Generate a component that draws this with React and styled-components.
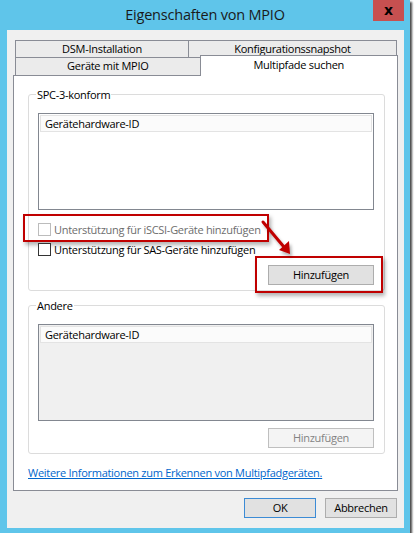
import React from "react";
import styled, {createGlobalStyle} from "styled-components";

const GlobalStyle = createGlobalStyle`
  html, body {
    margin: 0;
    padding: 0;
    background: #ffffff;
  }
  body {
    font-family: "Open Sans", "Noto Sans", sans-serif;
    font-size: 11px;
    letter-spacing: -0.28px;
    color: #000;
  }
`;

const Window = styled.div`
  width: 410px;
  height: 533px;
  background: #5fc5ea;
  box-shadow: 2px 2px 2px rgba(40, 40, 40, 0.85);
  display: flex;
  flex-direction: column;
`;

const TitleBar = styled.div`
  height: 30px;
  display: grid;
  grid-template-columns: 1fr auto 1fr;
  align-items: start;
  flex-shrink: 0;
`;

const Title = styled.div`
  grid-column: 2;
  font-size: 14.5px;
  line-height: 30px;
  color: #1a1a1a;
  letter-spacing: -0.2px;
`;

const CloseButton = styled.div`
  grid-column: 3;
  justify-self: end;
  width: 31px;
  height: 21px;
  margin-right: 6px;
  background: #c75050;
  display: flex;
  align-items: center;
  justify-content: center;
  font-family: "DejaVu Sans", sans-serif;
  font-weight: bold;
  font-size: 14px;
  line-height: 1;
  color: #000;
  padding-bottom: 2px;
  box-sizing: border-box;
`;

const Client = styled.div`
  flex: 1;
  margin: 0 6px 5px 7px;
  background: #f0f0f0;
  padding: 10px 6px 0 6px;
  display: flex;
  flex-direction: column;
`;

const TabRow = styled.div`
  display: flex;
  padding-left: 2px;
  height: ${p => p.$height}px;
  align-items: flex-start;
`;

const Tab = styled.div`
  width: ${p => p.$width}px;
  height: ${p => p.$selected ? 21 : p.$height}px;
  margin-top: ${p => p.$selected ? -2 : 0}px;
  margin-left: ${p => p.$shared ? -1 : 0}px;
  box-sizing: border-box;
  border: 1px solid #898c95;
  border-bottom: none;
  background: ${p => p.$selected ? "#ffffff" : "#ebebeb"};
  position: relative;
  z-index: ${p => p.$selected ? 2 : 0};
  text-align: center;
  line-height: ${p => p.$selected ? 18 : 16}px;
  color: #000;
`;

const Panel = styled.div`
  width: 385px;
  height: 416px;
  box-sizing: border-box;
  border: 1px solid #898c95;
  background: #ffffff;
  padding: 11px 12px 0 14px;
  position: relative;
  display: flex;
  flex-direction: column;
`;

const Group = styled.fieldset`
  margin: 0;
  margin-bottom: ${p => p.$gap || 0}px;
  padding: 0 10px 5px 9px;
  border: 1px solid #dcdcdc;
  border-radius: 3px;
  min-width: 0;
  display: flex;
  flex-direction: column;
`;

const Legend = styled.legend`
  margin-left: -2px;
  padding: 0 1px;
  line-height: 15px;
  color: #000;
`;

const ListBox = styled.div`
  height: 97px;
  margin-top: ${p => p.$top}px;
  box-sizing: border-box;
  border: 1px solid #828790;
  background: ${p => p.$disabled ? "#f0f0f0" : "#ffffff"};
  padding: 1px;
`;

const ListHeader = styled.div`
  height: 17px;
  box-sizing: border-box;
  border: 1px solid #e3e3e3;
  background: #fbfbfb;
  padding-left: 4px;
  line-height: 15px;
  color: #000;
`;

const CheckRow = styled.div`
  display: flex;
  align-items: center;
  gap: 3px;
  height: 20px;
  margin-top: ${p => p.$top || 0}px;
  position: relative;
  color: ${p => p.$disabled ? "#6d6d6d" : "#000"};
`;

const CheckBox = styled.span`
  width: 13px;
  height: 13px;
  box-sizing: border-box;
  border: 1px solid ${p => p.$disabled ? "#bcbcbc" : "#333333"};
  background: #ffffff;
  flex-shrink: 0;
`;

const ButtonRow = styled.div`
  display: flex;
  justify-content: flex-end;
  margin-top: ${p => p.$top}px;
  position: relative;
`;

const Button = styled.div`
  width: ${p => p.$width || 106}px;
  height: 20px;
  box-sizing: border-box;
  border: 1px solid ${p => p.$default ? "#3c8bd5" : p.$disabled ? "#bfbfbf" : "#adadad"};
  background: ${p => p.$disabled ? "#f4f4f4" : "#e1e1e1"};
  color: ${p => p.$disabled ? "#838383" : "#000"};
  text-align: center;
  line-height: 18px;
`;

const Highlight = styled.div`
  position: absolute;
  border: 2px solid #c00000;
  box-shadow: 2px 3px 4px rgba(0, 0, 0, 0.3);
  pointer-events: none;
`;

const Arrow = styled.svg`
  position: absolute;
  left: 240px;
  top: 138px;
  overflow: visible;
  pointer-events: none;
`;

const Link = styled.a`
  margin-top: 11px;
  margin-left: 0;
  color: #0066cc;
  text-decoration: underline;
  line-height: 16px;
  cursor: pointer;
`;

const Footer = styled.div`
  display: flex;
  justify-content: flex-end;
  gap: 9px;
  padding: 7px 1px 0 0;
`;

export default function App() {
    return (
        <>
            <GlobalStyle/>
            <Window>
                <TitleBar>
                    <Title>Eigenschaften von MPIO</Title>
                    <CloseButton>x</CloseButton>
                </TitleBar>
                <Client>
                    <TabRow $height={17}>
                        <Tab $width={174} $height={17}>DSM-Installation</Tab>
                        <Tab $width={209} $height={17} $shared>Konfigurationssnapshot</Tab>
                    </TabRow>
                    <TabRow $height={18}>
                        <Tab $width={186} $height={18}>Geräte mit MPIO</Tab>
                        <Tab $width={199} $height={18} $selected $shared>Multipfade suchen</Tab>
                    </TabRow>
                    <Panel>
                        <Group $gap={7}>
                            <Legend>SPC-3-konform</Legend>
                            <ListBox $top={11}>
                                <ListHeader>Gerätehardware-ID</ListHeader>
                            </ListBox>
                            <CheckRow $disabled $top={9}>
                                <CheckBox $disabled/>
                                Unterstützung für iSCSI-Geräte hinzufügen
                                <Highlight style={{left: -15, top: -5, width: 242, height: 24}}/>
                            </CheckRow>
                            <CheckRow>
                                <CheckBox/>
                                Unterstützung für SAS-Geräte hinzufügen
                            </CheckRow>
                            <ButtonRow $top={6}>
                                <Button>Hinzufügen</Button>
                                <Highlight style={{right: -9, top: -9, width: 124, height: 33}}/>
                            </ButtonRow>
                        </Group>
                        <Group>
                            <Legend>Andere</Legend>
                            <ListBox $top={11} $disabled>
                                <ListHeader>Gerätehardware-ID</ListHeader>
                            </ListBox>
                            <ButtonRow $top={7}>
                                <Button $disabled>Hinzufügen</Button>
                            </ButtonRow>
                        </Group>
                        <Link>Weitere Informationen zum Erkennen von Multipfadgeräten.</Link>
                        <Arrow width="40" height="40" viewBox="0 0 40 40">
                            <defs>
                                <filter id="sh" x="-50%" y="-50%" width="200%" height="200%">
                                    <feDropShadow dx="2" dy="3" stdDeviation="1.5" floodColor="#000" floodOpacity="0.3"/>
                                </filter>
                            </defs>
                            <g filter="url(#sh)">
                                <line x1="9" y1="8" x2="30" y2="33" stroke="#c00000" strokeWidth="3" strokeLinecap="round"/>
                                <polygon points="36,40 25,36 35,27" fill="#c00000"/>
                            </g>
                        </Arrow>
                    </Panel>
                    <Footer>
                        <Button $width={72} $default>OK</Button>
                        <Button $width={72}>Abbrechen</Button>
                    </Footer>
                </Client>
            </Window>
        </>
    );
}
